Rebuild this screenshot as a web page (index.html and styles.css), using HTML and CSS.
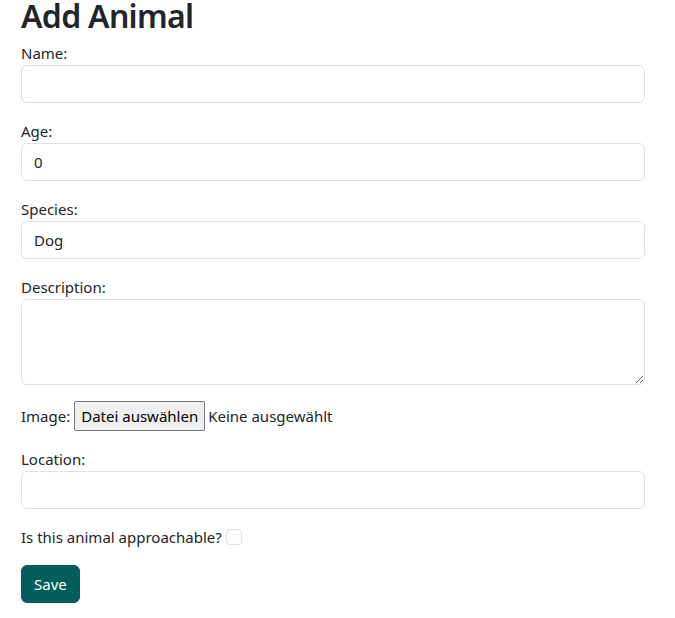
FILE: index.html
```html
<!DOCTYPE html>
<html lang="en">
<head>
<meta charset="utf-8">
<title>Add Animal</title>
<link rel="stylesheet" href="styles.css">
</head>
<body>
<main class="container">
  <h1 class="title">Add Animal</h1>
  <form class="form">
    <div class="group">
      <label class="label" for="name">Name:</label>
      <input class="control" id="name" type="text">
    </div>
    <div class="group">
      <label class="label" for="age">Age:</label>
      <input class="control" id="age" type="text" value="0">
    </div>
    <div class="group">
      <label class="label" for="species">Species:</label>
      <input class="control" id="species" type="text" value="Dog">
    </div>
    <div class="group">
      <label class="label" for="desc">Description:</label>
      <textarea class="control area" id="desc" rows="3"></textarea>
    </div>
    <div class="group inline">
      <span class="label-inline">Image:</span>
      <button type="button" class="file-btn">Datei auswählen</button>
      <span class="file-name">Keine ausgewählt</span>
    </div>
    <div class="group">
      <label class="label" for="loc">Location:</label>
      <input class="control" id="loc" type="text">
    </div>
    <div class="group check-row">
      <label class="label-inline" for="appr">Is this animal approachable?</label>
      <span class="check" id="appr"></span>
    </div>
    <button type="button" class="save">Save</button>
  </form>
</main>
</body>
</html>
```

FILE: styles.css
```css
* { box-sizing: border-box; }
html, body { margin: 0; padding: 0; background: #fff; }
body {
  font-family: "Noto Sans", "Open Sans", sans-serif;
  font-size: 15px;
  line-height: 24px;
  color: #212529;
}
.container {
  width: 624px;
  margin-left: 21px;
  padding-top: 1px;
}
.title {
  margin: 0 0 10px;
  font-size: 32px;
  line-height: 30px;
  font-weight: 600;
  letter-spacing: -0.7px;
}
.form { display: flex; flex-direction: column; }
.group { margin-bottom: 16px; }
.label { display: block; height: 24px; }
.control {
  display: block;
  width: 100%;
  height: 38px;
  padding: 6px 12px;
  font: inherit;
  color: #212529;
  border: 1px solid #dee2e6;
  border-radius: 6px;
  background: #fff;
  outline: none;
}
.area { height: 86px; resize: vertical; }
.inline { display: flex; align-items: center; height: 30px; }
.label-inline { margin-right: 4px; }
.file-btn {
  font: inherit;
  color: #000;
  height: 30px;
  padding: 0 6px;
  background: #efefef;
  border: 1px solid #767676;
  border-radius: 2px;
  margin-right: 3px;
}
.check-row { display: flex; align-items: center; }
.check {
  display: inline-block;
  width: 16px;
  height: 16px;
  border: 1px solid #dee2e6;
  border-radius: 4px;
  background: #fff;
}
.save {
  align-self: flex-start;
  font: inherit;
  color: #fff;
  background: #005e5b;
  border: 1px solid #005e5b;
  border-radius: 6px;
  height: 38px;
  padding: 0 12px;
}
```
